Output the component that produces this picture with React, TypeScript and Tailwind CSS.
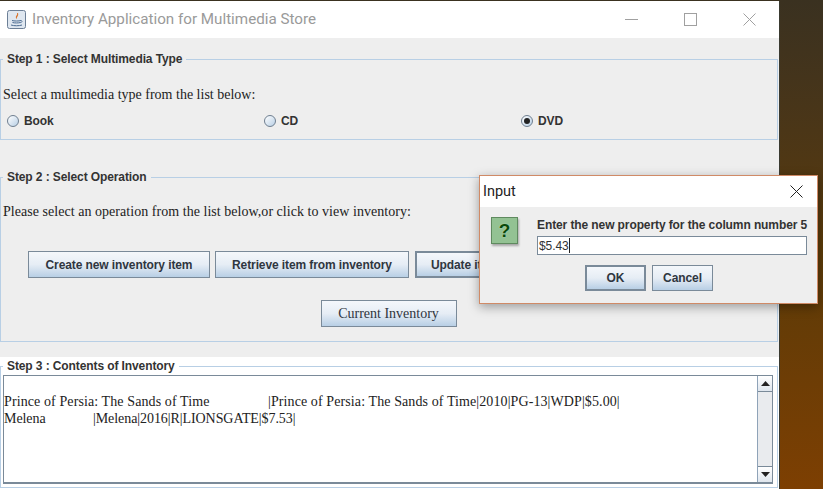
import React from "react";

const btn = "flex items-center justify-center border border-[#7a8a99] bg-gradient-to-b from-[#f4f7fb] via-[#e6edf5] to-[#b8cfe5] text-[#2f3640]";
const sans = "font-['Liberation_Sans',Arial,sans-serif] tracking-[-0.1px]";
const serif = "font-['Liberation_Serif','Times_New_Roman',serif]";
const fieldset = "border border-[#b8cfe5] rounded-none m-0 p-0 min-w-0";
const legend = `ml-[2px] px-[4px] h-[14px] leading-[14px] text-[12px] font-bold text-[#333] ${sans}`;

function Radio({ label, checked }: { label: string; checked?: boolean }) {
  return (
    <div className="flex items-center gap-[5px]">
      <span className="flex h-[12px] w-[12px] items-center justify-center rounded-full border border-[#6f7f90] bg-gradient-to-br from-white to-[#b8cfe5]">
        {checked && <span className="h-[6px] w-[6px] rounded-full bg-[#222]" />}
      </span>
      <span className={`text-[12px] font-bold text-[#333] ${sans}`}>{label}</span>
    </div>
  );
}

function JavaIcon() {
  return (
    <svg width="19" height="19" viewBox="0 0 19 19" className="shrink-0">
      <rect x="0.5" y="0.5" width="18" height="18" rx="2" fill="#dfe7f0" stroke="#6c7f96" />
      <path d="M10 3c1 2-2 3-1 5 .3.7 1 1 1 1-1-2 2-3 1-6z" fill="#d9722a" />
      <path d="M5 10.5c2 .7 7 .7 9 0M5.5 12.5c2 .6 6 .6 8 0" fill="none" stroke="#4a6a90" strokeWidth="1" />
      <path d="M14 10.5c1.500 0 1.500 2-.8 2.200" fill="none" stroke="#4a6a90" strokeWidth="0.8" />
      <path d="M4 15c3 1 8 1 11 0" fill="none" stroke="#4a6a90" strokeWidth="1" />
    </svg>
  );
}

export default function App() {
  return (
    <div className="relative h-[489px] w-[823px] overflow-hidden bg-gradient-to-b from-[#3a3120] via-[#5a3a08] to-[#7d3f02]">
      <div className="mt-px h-[488px] w-[780px] border-r border-[#3a3a30] bg-[#eeeeee]">
        {/* Title bar */}
        <div className="flex h-[37px] items-center bg-white pl-[7px]">
          <JavaIcon />
          <span className="ml-[6px] text-[15.200px] text-[#9a9a9a] font-['Roboto',sans-serif]">
            Inventory Application for Multimedia Store
          </span>
          <div className="ml-auto flex items-center">
            <svg width="13" height="13" viewBox="0 0 13 13" className="mr-[46px]">
              <path d="M0 6.500h13" stroke="#a0a0a0" strokeWidth="1" />
            </svg>
            <svg width="13" height="13" viewBox="0 0 13 13" className="mr-[46px]">
              <rect x="0.5" y="0.500" width="12" height="12" fill="none" stroke="#a0a0a0" />
            </svg>
            <svg width="13" height="13" viewBox="0 0 13 13" className="mr-[23px]">
              <path d="M0.500 0.500l12 12M12.500 0.500l-12 12" stroke="#a0a0a0" strokeWidth="1" />
            </svg>
          </div>
        </div>

        {/* Step 1 */}
        <div className="w-[778px] pt-[14px]">
          <fieldset className={`${fieldset} h-[88px]`}>
            <legend className={legend}>Step 1 : Select Multimedia Type</legend>
            <div className={`mt-[20px] pl-[2px] text-[14px] leading-[18px] text-[#222] ${serif}`}>
              Select a multimedia type from the list below:
            </div>
            <div className="mt-[8px] grid grid-cols-[257px_257px_1fr] pl-[6px]">
              <Radio label="Book" />
              <Radio label="CD" />
              <Radio label="DVD" checked />
            </div>
          </fieldset>

          {/* Step 2 */}
          <fieldset className={`${fieldset} mt-[30px] h-[172px]`}>
            <legend className={legend}>Step 2 : Select Operation</legend>
            <div className={`mt-[19px] pl-[2px] text-[14px] leading-[18px] tracking-[0.04px] text-[#222] ${serif}`}>
              Please select an operation from the list below,or click to view inventory:
            </div>
            <div className={`mt-[30px] flex gap-[5px] pl-[27px] text-[12px] font-bold ${sans}`}>
              <div className={`${btn} h-[27px] w-[182px]`}>Create new inventory item</div>
              <div className={`${btn} h-[27px] w-[194px]`}>Retrieve item from inventory</div>
              <div className={`${btn} ml-px h-[27px] w-[172px] !justify-start border-2 pl-[14px]`}>Update item</div>
            </div>
            <div className="mt-[22px] flex justify-center pr-px">
              <div className={`${btn} h-[27px] w-[136px] text-[14px] ${serif}`}>Current Inventory</div>
            </div>
          </fieldset>
        </div>

        {/* Step 3 */}
        <div className="mt-[15px] h-[132px] w-[779px] bg-white pt-[2px]">
          <fieldset className={`${fieldset} h-[129px] w-[778px]`}>
            <legend className={legend}>Step 3 : Contents of Inventory</legend>
            <div className="ml-[2px] mt-[2px] flex h-[109px] w-[770px] border border-b-2 border-[#7a8a99]">
              <div className={`flex-1 pt-[17px] text-[14px] leading-[17px] text-[#222] ${serif}`}>
                <div className="flex tracking-[0.1px]">
                  <span className="w-[264px]">Prince of Persia: The Sands of Time</span>
                  <span className="tracking-[0.1px]">|Prince of Persia: The Sands of Time|2010|PG-13|WDP|$5.00|</span>
                </div>
                <div className="flex tracking-[-0.07px]">
                  <span className="w-[89px]">Melena</span>
                  <span>|Melena|2016|R|LIONSGATE|$7.53|</span>
                </div>
              </div>
              <div className="flex w-[15px] flex-col justify-between border-l border-[#8fa3b8] bg-[#e9ebee]">
                <div className="flex h-[16px] items-center justify-center border-b border-[#7a8a99] bg-gradient-to-b from-white to-[#dfe6ee]">
                  <svg width="9" height="5" viewBox="0 0 9 5"><path d="M4.500 0L9 5H0z" fill="#222" /></svg>
                </div>
                <div className="flex h-[16px] items-center justify-center border-t border-[#7a8a99] bg-gradient-to-b from-white to-[#dfe6ee]">
                  <svg width="9" height="5" viewBox="0 0 9 5"><path d="M0 0h9L4.500 5z" fill="#222" /></svg>
                </div>
              </div>
            </div>
          </fieldset>
        </div>
      </div>

      {/* Dialog */}
      <div className="absolute left-[479px] top-[175px] h-[129px] w-[339px] border border-[#d08a66] bg-[#eeeeee] shadow-[0_3px_10px_rgba(0,0,0,0.35)]">
        <div className="flex h-[31px] items-center justify-between bg-white pb-0 pl-[3px] pr-[14px]">
          <span className="pt-px text-[14.500px] text-[#222] font-['Roboto',sans-serif]">Input</span>
          <svg width="13" height="13" viewBox="0 0 13 13">
            <path d="M0.500 0.500l12 12M12.500 0.500l-12 12" stroke="#222" strokeWidth="1" />
          </svg>
        </div>
        <div className="flex pl-[11px] pt-[10px]">
          <div className="flex h-[27px] w-[27px] items-center justify-center border border-[#5f8a5f] bg-[#93c293] shadow-[1px_2px_2px_rgba(0,0,0,0.3)]">
            <span className={`text-[19px] font-bold leading-none text-[#0b4a0b] [text-shadow:0_0_1px_#d8f5d8] ${sans}`}>?</span>
          </div>
          <div className="ml-[19px] w-[270px]">
            <div className={`whitespace-nowrap text-[12px] font-bold leading-[16px] text-[#333] ${sans}`}>
              Enter the new property for the column number 5
            </div>
            <div className={`mt-[3px] flex h-[19px] items-center border border-[#7a8a99] bg-white pl-px text-[12px] text-[#333] ${sans}`}>
              <span>$5.43</span>
              <span className="h-[15px] w-px bg-[#222]" />
            </div>
          </div>
        </div>
        <div className={`mt-[10px] flex gap-[6px] pl-[105px] text-[12px] font-bold ${sans}`}>
          <div className={`${btn} h-[26px] w-[61px] border-2`}>OK</div>
          <div className={`${btn} h-[26px] w-[61px]`}>Cancel</div>
        </div>
      </div>
    </div>
  );
}
